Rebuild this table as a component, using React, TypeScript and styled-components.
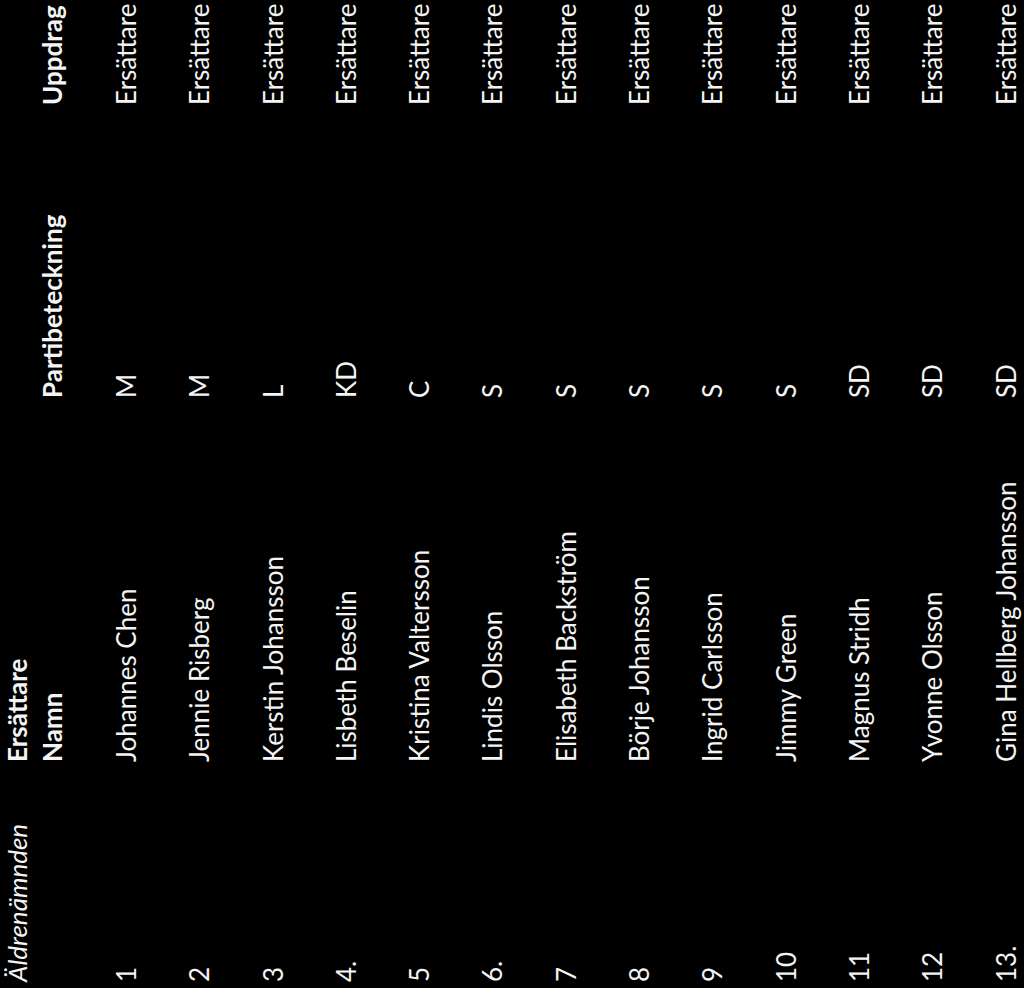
import React from 'react';
import styled, { createGlobalStyle } from 'styled-components';

const GlobalStyle = createGlobalStyle`
  html, body {
    margin: 0;
    padding: 0;
    background: #000;
    overflow: hidden;
  }
`;

// The scanned page lies on its side, so the sheet is laid out upright and turned.
const Page = styled.div`
  width: 1024px;
  height: 988px;
  overflow: hidden;
  background: #000;
`;

const Sheet = styled.div`
  width: 988px;
  height: 1024px;
  box-sizing: border-box;
  padding-left: 6px;
  transform-origin: top left;
  transform: translateY(988px) rotate(-90deg);
  display: flex;
  flex-direction: column;
  font-family: Lato, 'Liberation Sans', sans-serif;
  font-size: 26px;
  color: #f4f4f4;
`;

const Row = styled.div<{ $height: number }>`
  display: grid;
  grid-template-columns: 220px 364px 293px 1fr;
  height: ${p => p.$height}px;
  line-height: ${p => p.$height}px;
  white-space: nowrap;
`;

const Body = styled.div`
  padding-top: 20px;
  display: flex;
  flex-direction: column;
`;

const Cell = styled.div<{ $weight?: 'bold' | 'normal'; $italic?: boolean }>`
  font-weight: ${p => (p.$weight === 'bold' ? 700 : 400)};
  font-style: ${p => (p.$italic ? 'italic' : 'normal')};
  overflow: visible;
`;

const members = [
  { nr: '1', name: 'Johannes Chen', party: 'M' },
  { nr: '2', name: 'Jennie Risberg', party: 'M' },
  { nr: '3', name: 'Kerstin Johansson', party: 'L' },
  { nr: '4.', name: 'Lisbeth Beselin', party: 'KD' },
  { nr: '5', name: 'Kristina Valtersson', party: 'C' },
  { nr: '6.', name: 'Lindis Olsson', party: 'S' },
  { nr: '7', name: 'Elisabeth Backström', party: 'S' },
  { nr: '8', name: 'Börje Johansson', party: 'S' },
  { nr: '9', name: 'Ingrid Carlsson', party: 'S' },
  { nr: '10', name: 'Jimmy Green', party: 'S' },
  { nr: '11', name: 'Magnus Stridh', party: 'SD' },
  { nr: '12', name: 'Yvonne Olsson', party: 'SD' },
  { nr: '13.', name: 'Gina Hellberg Johansson', party: 'SD' },
];

const App = () => {
  return (
    <Page>
      <GlobalStyle />
      <Sheet>
        <Row $height={34}>
          <Cell $italic>Äldrenämnden</Cell>
          <Cell $weight="bold">Ersättare</Cell>
          <Cell />
          <Cell />
        </Row>
        <Row $height={36}>
          <Cell />
          <Cell $weight="bold">Namn</Cell>
          <Cell $weight="bold">Partibeteckning</Cell>
          <Cell $weight="bold">Uppdrag</Cell>
        </Row>
        <Body>
          {members.map(m => (
            <Row key={m.nr} $height={73.3}>
              <Cell>{m.nr}</Cell>
              <Cell>{m.name}</Cell>
              <Cell>{m.party}</Cell>
              <Cell>Ersättare</Cell>
            </Row>
          ))}
        </Body>
      </Sheet>
    </Page>
  );
};

export default App;
